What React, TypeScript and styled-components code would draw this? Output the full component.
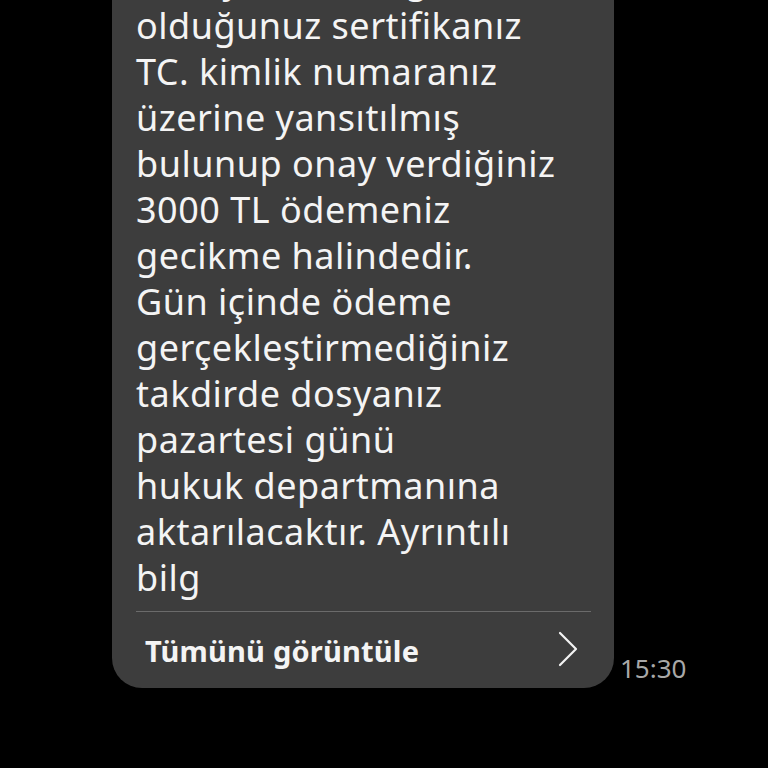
import styled, { createGlobalStyle } from 'styled-components';

const GlobalStyle = createGlobalStyle`
  html, body {
    margin: 0;
    padding: 0;
    background: #000;
  }
  body {
    font-family: "Noto Sans", "Open Sans", sans-serif;
  }
`;

const Screen = styled.div`
  height: 768px;
  overflow: hidden;
  display: flex;
  flex-direction: column;
  justify-content: flex-end;
  padding: 0 0 80px 112px;
  box-sizing: border-box;
`;

const MessageRow = styled.div`
  display: flex;
  align-items: flex-end;
  gap: 6px;
`;

const Bubble = styled.div`
  width: 502px;
  background: #3d3d3d;
  border-radius: 30px;
  padding: 0 23px 0 24px;
  box-sizing: border-box;
`;

const Body = styled.div`
  color: #f4f4f4;
  font-size: 36px;
  line-height: 46px;
  letter-spacing: 0.5px;
  padding-bottom: 10px;
`;

const Line = styled.div`
  white-space: nowrap;
`;

const Divider = styled.div`
  height: 1px;
  background: #6b6b6b;
`;

const Footer = styled.div`
  display: flex;
  align-items: center;
  justify-content: space-between;
  height: 76px;
  padding-left: 9px;
  padding-right: 13px;
  color: #f4f4f4;
  font-size: 29px;
  font-weight: 700;
  letter-spacing: 0.2px;
`;

const Chevron = styled.svg`
  width: 20px;
  height: 36px;
  margin-top: -2px;
`;

const Time = styled.div`
  color: #a8a8a8;
  font-size: 26px;
  margin-bottom: 2px;
`;

const lines = [
  'Sayın müşterimiz, e-Devlet',
  'sistemine kayıtlı ve',
  'aktif yetkilisi bağlı',
  'olduğunuz sertifikanız',
  'TC. kimlik numaranız',
  'üzerine yansıtılmış',
  'bulunup onay verdiğiniz',
  '3000 TL ödemeniz',
  'gecikme halindedir.',
  'Gün içinde ödeme',
  'gerçekleştirmediğiniz',
  'takdirde dosyanız',
  'pazartesi günü',
  'hukuk departmanına',
  'aktarılacaktır. Ayrıntılı',
  'bilg',
];

export default function App() {
  return (
    <>
      <GlobalStyle />
      <Screen>
        <MessageRow>
          <Bubble>
            <Body>
              {lines.map((l, i) => (
                <Line key={i}>{l}</Line>
              ))}
            </Body>
            <Divider />
            <Footer>
              <span>Tümünü görüntüle</span>
              <Chevron viewBox="0 0 20 36" fill="none">
                <polyline
                  points="2,2 18,18 2,34"
                  stroke="#f4f4f4"
                  strokeWidth="2.2"
                  strokeLinecap="round"
                  strokeLinejoin="round"
                />
              </Chevron>
            </Footer>
          </Bubble>
          <Time>15:30</Time>
        </MessageRow>
      </Screen>
    </>
  );
}
